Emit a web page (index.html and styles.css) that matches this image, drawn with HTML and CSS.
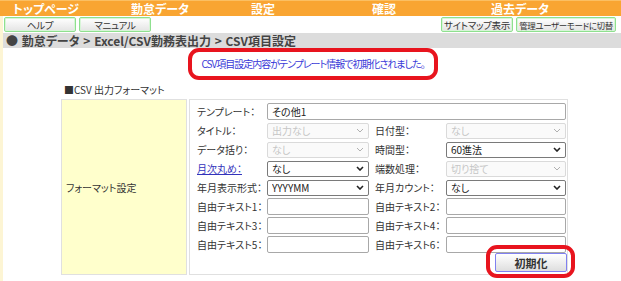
FILE: index.html
```html
<!DOCTYPE html>
<html>
<head>
    <meta charset="utf-8" />
    <title>CSV項目設定</title>
    <link rel="stylesheet" href="styles.css">
</head>
<body>
    <nav class="globalnav">
        <a class="nav1">トップページ</a>
        <a class="nav2">勤怠データ</a>
        <a class="nav3">設定</a>
        <a class="nav4">確認</a>
        <a class="nav5">過去データ</a>
    </nav>
    <section class="page">
        <div class="toolbar">
            <div class="toolleft">
                <button class="toolbtn w72">ヘルプ</button>
                <button class="toolbtn w72">マニュアル</button>
            </div>
            <div class="toolright">
                <button class="toolbtn w72">サイトマップ表示</button>
                <button class="toolbtn w99 tight">管理ユーザーモードに切替</button>
            </div>
        </div>
        <div class="crumb">● 勤怠データ &gt; Excel/CSV勤務表出力 &gt; CSV項目設定</div>

        <div class="msgrow">
            <div class="redmark msg">CSV項目設定内容がテンプレート情報で初期化されました。</div>
        </div>

        <div class="fmtwrap">
            <div class="fmttitle">■CSV 出力フォーマット</div>
            <div class="fmttable">
                <div class="fmthead">フォーマット設定</div>
                <div class="fmtbody">
                    <div class="grid">
                        <label class="lbl">テンプレート：</label>
                        <input class="txt span3" type="text" value="その他1" />

                        <label class="lbl">タイトル：</label>
                        <div class="sel off"><select disabled><option>出力なし</option></select><svg width="8" height="5" viewBox="0 0 8 5"><path d="M1 1 L4 4 L7 1" /></svg></div>
                        <span></span>
                        <label class="lbl">日付型：</label>
                        <div class="sel off"><select disabled><option>なし</option></select><svg width="8" height="5" viewBox="0 0 8 5"><path d="M1 1 L4 4 L7 1" /></svg></div>

                        <label class="lbl">データ括り：</label>
                        <div class="sel off"><select disabled><option>なし</option></select><svg width="8" height="5" viewBox="0 0 8 5"><path d="M1 1 L4 4 L7 1" /></svg></div>
                        <span></span>
                        <label class="lbl">時間型：</label>
                        <div class="sel"><select><option>60進法</option></select><svg width="8" height="5" viewBox="0 0 8 5"><path d="M1 1 L4 4 L7 1" /></svg></div>

                        <label class="lbl"><a class="lnk">月次丸め：</a></label>
                        <div class="sel"><select><option>なし</option></select><svg width="8" height="5" viewBox="0 0 8 5"><path d="M1 1 L4 4 L7 1" /></svg></div>
                        <span></span>
                        <label class="lbl">端数処理：</label>
                        <div class="sel off"><select disabled><option>切り捨て</option></select><svg width="8" height="5" viewBox="0 0 8 5"><path d="M1 1 L4 4 L7 1" /></svg></div>

                        <label class="lbl">年月表示形式：</label>
                        <div class="sel"><select><option>YYYYMM</option></select><svg width="8" height="5" viewBox="0 0 8 5"><path d="M1 1 L4 4 L7 1" /></svg></div>
                        <span></span>
                        <label class="lbl">年月カウント：</label>
                        <div class="sel"><select><option>なし</option></select><svg width="8" height="5" viewBox="0 0 8 5"><path d="M1 1 L4 4 L7 1" /></svg></div>

                        <label class="lbl">自由テキスト1：</label>
                        <input class="txt" type="text" />
                        <span></span>
                        <label class="lbl">自由テキスト2：</label>
                        <input class="txt" type="text" />

                        <label class="lbl">自由テキスト3：</label>
                        <input class="txt" type="text" />
                        <span></span>
                        <label class="lbl">自由テキスト4：</label>
                        <input class="txt" type="text" />

                        <label class="lbl">自由テキスト5：</label>
                        <input class="txt" type="text" />
                        <span></span>
                        <label class="lbl">自由テキスト6：</label>
                        <input class="txt" type="text" />
                    </div>
                    <div class="btnrow">
                        <span class="redmark btnmark"><button class="initbtn">初期化</button></span>
                    </div>
                </div>
            </div>
        </div>
    </section>
</body>
</html>
```

FILE: styles.css
```css
* {
    margin: 0;
    padding: 0;
    box-sizing: border-box;
}
body {
    width: 621px;
    height: 281px;
    overflow: hidden;
    font-family: "Noto Sans CJK JP", "Noto Sans", sans-serif;
    font-feature-settings: "palt";
    color: #333;
    background: #fff;
}
button, input, select {
    font-family: inherit;
    font-feature-settings: "palt";
}
/* top menu */
.globalnav {
    display: flex;
    height: 16px;
    background: #f9a532;
    border-top: 1px solid #fbbf62;
}
.globalnav a {
    display: block;
    color: #fff;
    font-weight: bold;
    font-size: 12px;
    line-height: 15px;
    text-align: center;
}
.nav1 { width: 92px; }
.nav2 { width: 136px; }
.nav3 { width: 70px; }
.nav4 { width: 172px; }
.nav5 { width: 100px; }

.page {
    border-left: 3px solid #fdf5d4;
    height: 265px;
}
.toolbar {
    display: flex;
    justify-content: space-between;
    padding: 1px 5px 0 1px;
    height: 17px;
}
.toolleft, .toolright {
    display: flex;
    gap: 3px;
}
.toolbtn {
    flex: none;
    height: 15px;
    padding: 0;
    border: 1px solid #8fe08f;
    border-radius: 2px;
    background: linear-gradient(#ffffff, #e4e4e4);
    font-size: 9.5px;
    letter-spacing: -0.3px;
    line-height: 12px;
    color: #333;
    white-space: nowrap;
    overflow: hidden;
    box-shadow: inset 0 0 0 1px #d8f5d8;
}
.toolbtn.tight {
    font-size: 8.5px;
    letter-spacing: -0.4px;
}
.w72 { width: 72px; }
.w99 { width: 100px; }

.crumb {
    height: 15px;
    background: #dcdcdc;
    font-size: 12px;
    font-weight: bold;
    line-height: 15px;
    color: #444;
    padding-left: 3px;
    white-space: pre;
    word-spacing: 1px;
}

/* red marker drawn over the screenshot */
.redmark {
    border: 4px solid #e8141e;
    border-radius: 11px;
}
.msgrow {
    display: flex;
    justify-content: center;
    padding-left: 2px;
}
.msg {
    width: 250px;
    height: 32px;
    font-size: 10px;
    letter-spacing: -1px;
    color: #3a3ad8;
    text-align: center;
    line-height: 24px;
    white-space: nowrap;
}

.fmtwrap {
    margin-left: 58px;
    width: 507px;
}
.fmttitle {
    font-size: 10px;
    line-height: 19px;
    height: 19px;
    padding-left: 3px;
}
.fmttable {
    display: flex;
    gap: 2px;
    height: 176px;
}
.fmthead {
    width: 126px;
    background: #ffffcc;
    border: 1px solid #e0e0e0;
    font-size: 10px;
    display: flex;
    align-items: center;
    padding-left: 4px;
}
.fmtbody {
    flex: 1;
    border: 1px solid #e0e0e0;
    padding: 3px 0 0 7px;
}
.grid {
    display: grid;
    grid-template-columns: 70px 102px 6px 71px 120px;
    grid-auto-rows: 17px;
    row-gap: 2px;
    align-items: center;
}
.lbl {
    font-size: 10px;
    color: #333;
    white-space: nowrap;
}
.lnk {
    color: #3333bb;
    text-decoration: underline;
}
.span3 {
    grid-column: 2 / 6;
}
.txt {
    height: 17px;
    width: 100%;
    border: 1px solid #a8a8a8;
    border-radius: 2px;
    font-size: 10px;
    padding: 0 4px;
    color: #222;
}
.sel {
    display: flex;
    align-items: center;
    height: 16px;
    border: 1px solid #7a7a7a;
    border-radius: 2px;
    background: #fff;
    padding-right: 4px;
}
.sel select {
    flex: 1;
    appearance: none;
    -webkit-appearance: none;
    border: none;
    background: transparent;
    font-size: 10px;
    color: #222;
    padding-left: 4px;
    outline: none;
}
.sel svg path {
    fill: none;
    stroke: #222;
    stroke-width: 1.6;
}
.sel.off {
    border-color: #dadada;
    background: #fafafa;
}
.sel.off select {
    color: #b0b0b0;
}
.sel.off svg path {
    stroke: #b0b0b0;
    stroke-width: 1;
}

.btnrow {
    display: flex;
    justify-content: flex-end;
    margin-top: -8px;
    margin-right: -8px;
}
.btnmark {
    padding: 4px 4px 2px 5px;
    display: flex;
}
.initbtn {
    width: 72px;
    height: 19px;
    border: 1px solid #8080f0;
    border-radius: 2px;
    background: linear-gradient(#ffffff, #dedede);
    font-size: 11px;
    font-weight: bold;
    color: #333;
}
```
